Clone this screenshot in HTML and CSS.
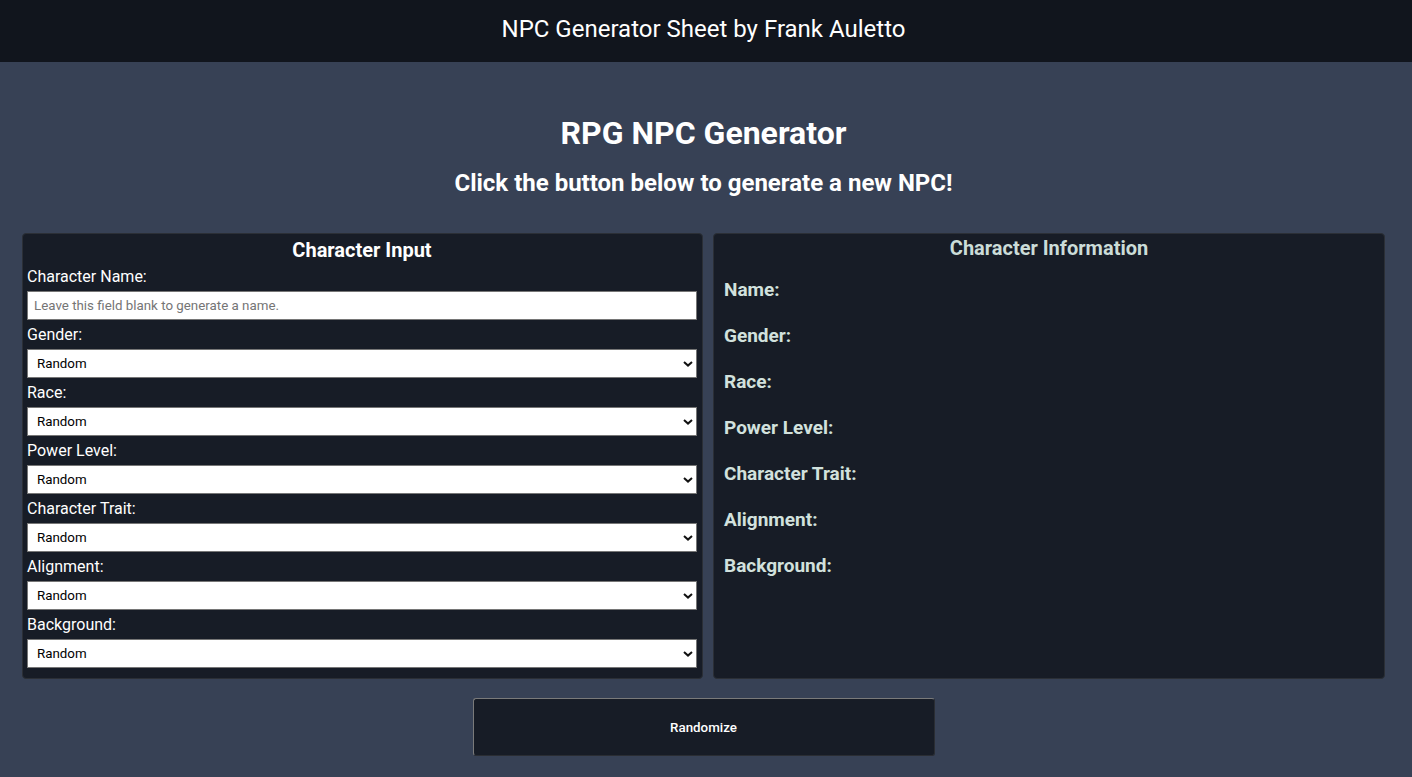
FILE: index.html
```html
<!DOCTYPE html>
<html lang="en">
<head>
<meta charset="utf-8">
<title>NPC Generator Sheet</title>
<link rel="stylesheet" href="styles.css">
</head>
<body>
<header class="topbar">NPC Generator Sheet by Frank Auletto</header>
<main class="main">
  <h1 class="title">RPG NPC Generator</h1>
  <h2 class="subtitle">Click the button below to generate a new NPC!</h2>
  <div class="panels">
    <section class="panel input-panel">
      <h3 class="panel-title">Character Input</h3>
      <label class="field-label">Character Name:</label>
      <input class="text-input" type="text" placeholder="Leave this field blank to generate a name.">
      <label class="field-label">Gender:</label>
      <div class="select-wrap"><select class="select"><option>Random</option></select><svg class="chev" viewBox="0 0 10 6" width="10" height="6"><path d="M1 1 L5 4.6 L9 1" fill="none" stroke="#111" stroke-width="2"/></svg></div>
      <label class="field-label">Race:</label>
      <div class="select-wrap"><select class="select"><option>Random</option></select><svg class="chev" viewBox="0 0 10 6" width="10" height="6"><path d="M1 1 L5 4.6 L9 1" fill="none" stroke="#111" stroke-width="2"/></svg></div>
      <label class="field-label">Power Level:</label>
      <div class="select-wrap"><select class="select"><option>Random</option></select><svg class="chev" viewBox="0 0 10 6" width="10" height="6"><path d="M1 1 L5 4.6 L9 1" fill="none" stroke="#111" stroke-width="2"/></svg></div>
      <label class="field-label">Character Trait:</label>
      <div class="select-wrap"><select class="select"><option>Random</option></select><svg class="chev" viewBox="0 0 10 6" width="10" height="6"><path d="M1 1 L5 4.6 L9 1" fill="none" stroke="#111" stroke-width="2"/></svg></div>
      <label class="field-label">Alignment:</label>
      <div class="select-wrap"><select class="select"><option>Random</option></select><svg class="chev" viewBox="0 0 10 6" width="10" height="6"><path d="M1 1 L5 4.6 L9 1" fill="none" stroke="#111" stroke-width="2"/></svg></div>
      <label class="field-label">Background:</label>
      <div class="select-wrap"><select class="select"><option>Random</option></select><svg class="chev" viewBox="0 0 10 6" width="10" height="6"><path d="M1 1 L5 4.6 L9 1" fill="none" stroke="#111" stroke-width="2"/></svg></div>
    </section>
    <section class="panel info-panel">
      <h3 class="panel-title info-title">Character Information</h3>
      <div class="info-row">Name:</div>
      <div class="info-row">Gender:</div>
      <div class="info-row">Race:</div>
      <div class="info-row">Power Level:</div>
      <div class="info-row">Character Trait:</div>
      <div class="info-row">Alignment:</div>
      <div class="info-row">Background:</div>
    </section>
  </div>
  <div class="actions">
    <button class="btn" type="button">Randomize</button>
  </div>
</main>
</body>
</html>
```
FILE: styles.css
```css
* { box-sizing: border-box; }
html, body {
  margin: 0;
  padding: 0;
}
body {
  background: #374155;
  font-family: Roboto, "Liberation Sans", Arial, sans-serif;
  color: #fff;
  min-height: 777px;
}
.topbar {
  height: 62px;
  background: #11151d;
  display: flex;
  align-items: center;
  justify-content: center;
  font-size: 24px;
  color: #fff;
  padding: 0 5px 4px 0;
}
.main {
  padding: 53px 5px 0 0;
}
.title {
  margin: 0;
  text-align: center;
  font-size: 32px;
  line-height: 37px;
  font-weight: 700;
}
.subtitle {
  margin: 17px 0 0;
  text-align: center;
  font-size: 24px;
  line-height: 28px;
  font-weight: 700;
}
.panels {
  margin-top: 36px;
  display: grid;
  grid-template-columns: 681px 672px;
  gap: 10px;
  padding-left: 22px;
}
.panel {
  background: #171c26;
  border: 1px solid #2b2f36;
  border-radius: 4px;
}
.input-panel {
  padding: 4px 5px 10px 4px;
  display: flex;
  flex-direction: column;
}
.panel-title {
  margin: 0;
  text-align: center;
  font-size: 20px;
  line-height: 24px;
  font-weight: 700;
}
.field-label {
  display: block;
  font-size: 16px;
  line-height: 19px;
  padding: 5px 0;
}
.text-input {
  display: block;
  width: 100%;
  height: 29px;
  border: 1px solid #767676;
  border-radius: 0;
  background: #fff;
  font-family: Roboto, "Liberation Sans", Arial, sans-serif;
  font-size: 13.33px;
  padding: 0 6px;
  color: #000;
  outline: none;
}
.text-input::placeholder { color: #757575; }
.select-wrap {
  position: relative;
  height: 29px;
}
.select {
  appearance: none;
  -webkit-appearance: none;
  display: block;
  width: 100%;
  height: 29px;
  border: 1px solid #767676;
  border-radius: 0;
  background: #fff;
  font-family: Roboto, "Liberation Sans", Arial, sans-serif;
  font-size: 13.33px;
  color: #000;
  padding: 0 9px;
}
.chev {
  position: absolute;
  right: 4px;
  top: 12px;
  pointer-events: none;
}
.info-panel {
  padding: 2px 10px 10px;
  color: #d2e1dd;
}
.info-title {
  color: #cbdcd8;
  margin-bottom: 5px;
}
.info-row {
  height: 46px;
  display: flex;
  align-items: center;
  font-size: 19px;
  font-weight: 700;
  padding-top: 2px;
}
.actions {
  display: flex;
  justify-content: center;
  margin-top: 19px;
}
.btn {
  width: 462px;
  height: 58px;
  background: #171c26;
  color: #fff;
  font-family: Roboto, "Liberation Sans", Arial, sans-serif;
  font-size: 13.33px;
  font-weight: 500;
  border: 1px solid;
  border-color: #7a7a7a #2a2d33 #2a2d33 #7a7a7a;
  border-radius: 3px;
}
```
